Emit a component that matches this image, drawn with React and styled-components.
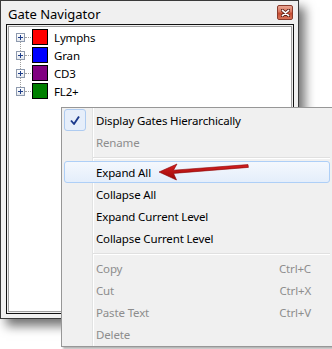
import React from 'react'
import styled, { createGlobalStyle } from 'styled-components'

const GlobalStyle = createGlobalStyle`
  html, body {
    margin: 0;
    padding: 0;
    background: #ffffff;
  }
  body {
    font-family: "Noto Sans", "Open Sans", sans-serif;
    width: 332px;
    height: 349px;
    overflow: hidden;
  }
`

const gates = [
  { name: 'Lymphs', color: '#ff0000' },
  { name: 'Gran', color: '#0000ff' },
  { name: 'CD3', color: '#800080' },
  { name: 'FL2+', color: '#008000' },
]

const menu = [
  { label: 'Display Gates Hierarchically', checked: true },
  { label: 'Rename', disabled: true },
  { sep: true },
  { label: 'Expand All', hot: true },
  { label: 'Collapse All' },
  { label: 'Expand Current Level' },
  { label: 'Collapse Current Level' },
  { sep: true },
  { label: 'Copy', keys: 'Ctrl+C', disabled: true },
  { label: 'Cut', keys: 'Ctrl+X', disabled: true },
  { label: 'Paste Text', keys: 'Ctrl+V', disabled: true },
  { label: 'Delete', disabled: true },
]

function App() {
  return (
    <>
      <GlobalStyle />
      <Stage>
        <Window>
          <TitleBar>
            <Title>Gate Navigator</Title>
            <CloseButton>
              <svg width="9" height="8" viewBox="0 0 9 8">
                <path d="M1 1 L8 7 M8 1 L1 7" stroke="#5a1a10" strokeWidth="3.2" strokeLinecap="round" />
                <path d="M1.4 1.3 L7.6 6.7 M7.6 1.3 L1.4 6.7" stroke="#ffffff" strokeWidth="1.6" strokeLinecap="round" />
              </svg>
            </CloseButton>
          </TitleBar>
          <Panel>
            <TreeArea>
              {gates.map((g, i) => (
                <TreeRow key={g.name}>
                  <Expander $first={i === 0} $last={i === gates.length - 1}>
                    <svg width="9" height="9" viewBox="0 0 9 9">
                      <path d="M2 4.5 H7 M4.5 2 V7" stroke="#1e3e8a" strokeWidth="1" />
                    </svg>
                  </Expander>
                  <Connector />
                  <Swatch $color={g.color} />
                  <TreeLabel>{g.name}</TreeLabel>
                </TreeRow>
              ))}
            </TreeArea>
          </Panel>
        </Window>

        <Menu>
          {menu.map((m, i) =>
            m.sep ? (
              <Separator key={'s' + i} />
            ) : (
              <MenuItem key={m.label} $hot={m.hot} $disabled={m.disabled}>
                <IconCell $checked={m.checked}>
                  {m.checked && (
                    <svg width="12" height="11" viewBox="0 0 12 11">
                      <path d="M2 5.5 L5 9 L10 1.5" stroke="#1c3a8c" strokeWidth="1.9" fill="none" strokeLinejoin="round" />
                    </svg>
                  )}
                </IconCell>
                <ItemLabel>{m.label}</ItemLabel>
                {m.keys && <Shortcut>{m.keys}</Shortcut>}
              </MenuItem>
            )
          )}
        </Menu>

        <Arrow width="100" height="24" viewBox="0 0 100 24">
          <defs>
            <linearGradient id="arw" x1="0" y1="0" x2="0" y2="1">
              <stop offset="0" stopColor="#d62020" />
              <stop offset="1" stopColor="#9a0808" />
            </linearGradient>
          </defs>
          <path
            d="M4 12 L22 4 L18.5 10.2 L93 4.6 L93.4 7.4 L18.6 13.4 L21.5 20 Z"
            fill="url(#arw)"
            stroke="#8c0505"
            strokeWidth="0.6"
            strokeLinejoin="round"
          />
        </Arrow>
      </Stage>
    </>
  )
}

const Stage = styled.div`
  position: relative;
  width: 332px;
  height: 349px;
`

const Window = styled.div`
  width: 297px;
  height: 317px;
  border: 1px solid #3a3a3a;
  background: #f0f0f0;
  box-shadow: 6px 7px 10px rgba(0, 0, 0, 0.55);
  display: flex;
  flex-direction: column;
`

const TitleBar = styled.div`
  height: 23px;
  display: flex;
  align-items: center;
  justify-content: space-between;
  padding: 0 5px 0 7px;
  flex-shrink: 0;
`

const Title = styled.span`
  font-size: 13px;
  color: #000;
  position: relative;
  top: 1px;
`

const CloseButton = styled.div`
  width: 14px;
  height: 13px;
  border: 1px solid #8a3b2c;
  border-radius: 2px;
  background: linear-gradient(#e9a592 0%, #d9755e 45%, #c44a30 55%, #d8735a 100%);
  display: flex;
  align-items: center;
  justify-content: center;
`

const Panel = styled.div`
  flex: 1;
  margin: 0 4px 4px 5px;
  border: 1px solid #111;
  padding: 1px;
  display: flex;
`

const TreeArea = styled.div`
  flex: 1;
  background: #fff;
  border: 1px solid #a0a0a0;
  padding: 1px 0 0 7px;
`

const TreeRow = styled.div`
  height: 18px;
  display: flex;
  align-items: center;
`

const Expander = styled.div`
  position: relative;
  width: 7px;
  height: 7px;
  border: 1px solid #8e9aae;
  background: linear-gradient(#ffffff, #e4e8ee);
  display: flex;

  svg {
    margin: -1px;
  }

  &::before,
  &::after {
    content: '';
    position: absolute;
    left: 3px;
    width: 0;
    border-left: 1px dotted #a0a0a0;
  }

  &::before {
    display: ${p => (p.$first ? 'none' : 'block')};
    top: -6px;
    height: 5px;
  }

  &::after {
    display: ${p => (p.$last ? 'none' : 'block')};
    top: 8px;
    height: 5px;
  }
`

const Connector = styled.div`
  width: 6px;
  height: 0;
  border-top: 1px dotted #a0a0a0;
  margin: 0 1px 0 0;
`

const Swatch = styled.div`
  width: 14px;
  height: 14px;
  border: 1px solid #000;
  background: ${p => p.$color};
`

const TreeLabel = styled.span`
  font-size: 11.5px;
  letter-spacing: -0.15px;
  color: #000;
  margin-left: 6px;
`

const Menu = styled.div`
  position: absolute;
  left: 61px;
  top: 107px;
  width: 266px;
  border: 1px solid #979797;
  padding: 1px 2px;
  background: linear-gradient(
    to right,
    #f0f0f0 30px,
    #e2e3e3 30px,
    #e2e3e3 31px,
    #ffffff 31px,
    #ffffff 32px,
    #f0f0f0 32px
  );
  box-shadow: 2px 2px 2px rgba(0, 0, 0, 0.3);
`

const MenuItem = styled.div`
  height: 22px;
  box-sizing: border-box;
  display: flex;
  align-items: center;
  border: 1px solid ${p => (p.$hot ? '#aecff7' : 'transparent')};
  border-radius: 3px;
  background: ${p => (p.$hot ? 'linear-gradient(#f4f8fd, #e4eefb)' : 'transparent')};
  color: ${p => (p.$disabled ? '#8d8d8d' : '#000')};
  font-size: 11.5px;
  letter-spacing: -0.15px;
`

const IconCell = styled.div`
  width: 20px;
  height: 20px;
  margin-left: -1px;
  border: 1px solid ${p => (p.$checked ? '#aecbf0' : 'transparent')};
  border-radius: 3px;
  background: ${p => (p.$checked ? '#e6eefa' : 'transparent')};
  display: flex;
  align-items: center;
  justify-content: center;
`

const ItemLabel = styled.span`
  margin-left: 10px;
  flex: 1;
`

const Shortcut = styled.span`
  margin-right: 18px;
`

const Separator = styled.div`
  height: 8px;
  margin-left: 29px;
  display: flex;
  flex-direction: column;
  justify-content: center;

  &::before {
    content: '';
    height: 1px;
    background: #e0e0e0;
    box-shadow: 0 1px 0 #ffffff;
  }
`

const Arrow = styled.svg`
  position: absolute;
  left: 155px;
  top: 160px;
`

export default App
